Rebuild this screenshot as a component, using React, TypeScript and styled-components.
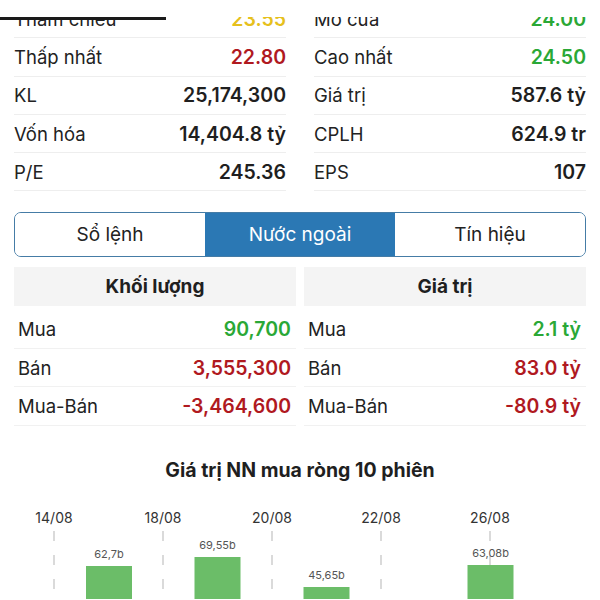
import styled, { createGlobalStyle } from 'styled-components';

const GlobalStyle = createGlobalStyle`
  html, body {
    margin: 0;
    padding: 0;
    background: #ffffff;
  }

  body {
    font-family: Inter, "Noto Sans", "Liberation Sans", sans-serif;
    color: #1f1f1f;
  }
`;

const Page = styled.div`
  position: relative;
  width: 600px;
  height: 600px;
  overflow: hidden;
  background: #ffffff;
`;

const TopCover = styled.div`
  position: absolute;
  left: 0;
  top: 0;
  width: 100%;
  height: 17px;
  background: #ffffff;
  z-index: 2;

  &::after {
    content: '';
    position: absolute;
    left: 0;
    bottom: -3px;
    width: 166px;
    height: 3px;
    background: #1a1a1a;
  }
`;

const StatsGrid = styled.div`
  display: grid;
  grid-template-columns: 1fr 1fr;
  column-gap: 28px;
  padding: 0 14px;
`;

const StatColumn = styled.div`
  display: flex;
  flex-direction: column;
`;

const StatRow = styled.div`
  display: flex;
  align-items: center;
  justify-content: space-between;
  height: 38.3px;
  box-sizing: border-box;
  border-bottom: 1px solid #eeeeee;
  font-size: 18.5px;
`;

const StatLabel = styled.span`
  color: #222222;
`;

const StatValue = styled.span<{ tone?: string }>`
  font-size: 19.5px;
  font-weight: 600;
  color: ${(props) => props.tone || '#1f1f1f'};
`;

const Tabs = styled.div`
  display: flex;
  margin: 21px 14px 0 14px;
  height: 45px;
  box-sizing: border-box;
  border: 1.5px solid #457ca6;
  border-radius: 7px;
  overflow: hidden;
`;

const Tab = styled.div<{ active?: boolean }>`
  flex: 1;
  display: flex;
  align-items: center;
  justify-content: center;
  font-size: 19px;
  background: ${(props) => (props.active ? '#2b78b4' : '#ffffff')};
  color: ${(props) => (props.active ? '#ffffff' : '#222222')};
`;

const Tables = styled.div`
  display: grid;
  grid-template-columns: 1fr 1fr;
  column-gap: 8px;
  margin-top: 10px;
  padding: 0 14px;
`;

const Table = styled.div`
  display: flex;
  flex-direction: column;
`;

const TableHeader = styled.div`
  display: flex;
  align-items: center;
  justify-content: center;
  height: 39px;
  margin-bottom: 4px;
  background: #f4f4f4;
  font-size: 19px;
  font-weight: 700;
  color: #1f1f1f;
`;

const TableRow = styled.div`
  display: flex;
  align-items: center;
  justify-content: space-between;
  height: 38.5px;
  box-sizing: border-box;
  padding: 0 5px 0 4px;
  border-bottom: 1px solid #f1f1f1;
  font-size: 18.5px;
`;

const ChartTitle = styled.div`
  margin-top: 31px;
  text-align: center;
  font-size: 19.5px;
  font-weight: 700;
  line-height: 26px;
  color: #1f1f1f;
`;

const ChartBox = styled.svg`
  display: block;
  margin-top: 16px;
`;

const RED = '#b0191f';
const GREEN = '#2aa836';
const YELLOW = '#e6c01c';

const leftStats = [
  { label: 'Tham chiếu', value: '23.55', tone: YELLOW },
  { label: 'Thấp nhất', value: '22.80', tone: RED },
  { label: 'KL', value: '25,174,300' },
  { label: 'Vốn hóa', value: '14,404.8 tỷ' },
  { label: 'P/E', value: '245.36' },
];

const rightStats = [
  { label: 'Mở cửa', value: '24.00', tone: GREEN },
  { label: 'Cao nhất', value: '24.50', tone: GREEN },
  { label: 'Giá trị', value: '587.6 tỷ' },
  { label: 'CPLH', value: '624.9 tr' },
  { label: 'EPS', value: '107' },
];

const volumeRows = [
  { label: 'Mua', value: '90,700', tone: GREEN },
  { label: 'Bán', value: '3,555,300', tone: RED },
  { label: 'Mua-Bán', value: '-3,464,600', tone: RED },
];

const valueRows = [
  { label: 'Mua', value: '2.1 tỷ', tone: GREEN },
  { label: 'Bán', value: '83.0 tỷ', tone: RED },
  { label: 'Mua-Bán', value: '-80.9 tỷ', tone: RED },
];

const dates = [
  { x: 54, text: '14/08' },
  { x: 163, text: '18/08' },
  { x: 272, text: '20/08' },
  { x: 381, text: '22/08' },
  { x: 490, text: '26/08' },
];

const bars = [
  { x: 109, top: 67, label: '62,7b' },
  { x: 217.5, top: 58, label: '69,55b' },
  { x: 326.5, top: 88, label: '45,65b' },
  { x: 490.5, top: 66, label: '63,08b' },
];

const ForeignChart = () => (
  <ChartBox width={600} height={100} viewBox="0 0 600 100">
    {dates.map((d) => (
      <g key={d.text}>
        <text
          x={d.x}
          y={24}
          textAnchor="middle"
          fontSize={14}
          fill="#333333"
          fontFamily="Inter, sans-serif"
        >
          {d.text}
        </text>
        <line x1={d.x} y1={32} x2={d.x} y2={100} stroke="#b5b5b5" strokeWidth={1} strokeDasharray="10 14" />
      </g>
    ))}
    {bars.map((b) => (
      <g key={b.label}>
        <rect x={b.x - 23} y={b.top} width={46} height={100 - b.top} fill="#6bbd68" />
        <text
          x={b.x}
          y={b.top - 8}
          textAnchor="middle"
          fontSize={11}
          fill="#555555"
          fontFamily="Inter, sans-serif"
        >
          {b.label}
        </text>
      </g>
    ))}
  </ChartBox>
);

const App = () => {
  return (
    <Page>
      <GlobalStyle />
      <TopCover />
      <StatsGrid>
        <StatColumn>
          {leftStats.map((s) => (
            <StatRow key={s.label}>
              <StatLabel>{s.label}</StatLabel>
              <StatValue tone={s.tone}>{s.value}</StatValue>
            </StatRow>
          ))}
        </StatColumn>
        <StatColumn>
          {rightStats.map((s) => (
            <StatRow key={s.label}>
              <StatLabel>{s.label}</StatLabel>
              <StatValue tone={s.tone}>{s.value}</StatValue>
            </StatRow>
          ))}
        </StatColumn>
      </StatsGrid>

      <Tabs>
        <Tab>Sổ lệnh</Tab>
        <Tab active>Nước ngoài</Tab>
        <Tab>Tín hiệu</Tab>
      </Tabs>

      <Tables>
        <Table>
          <TableHeader>Khối lượng</TableHeader>
          {volumeRows.map((r) => (
            <TableRow key={r.label}>
              <StatLabel>{r.label}</StatLabel>
              <StatValue tone={r.tone}>{r.value}</StatValue>
            </TableRow>
          ))}
        </Table>
        <Table>
          <TableHeader>Giá trị</TableHeader>
          {valueRows.map((r) => (
            <TableRow key={r.label}>
              <StatLabel>{r.label}</StatLabel>
              <StatValue tone={r.tone}>{r.value}</StatValue>
            </TableRow>
          ))}
        </Table>
      </Tables>

      <ChartTitle>Giá trị NN mua ròng 10 phiên</ChartTitle>
      <ForeignChart />
    </Page>
  );
};

export default App;
